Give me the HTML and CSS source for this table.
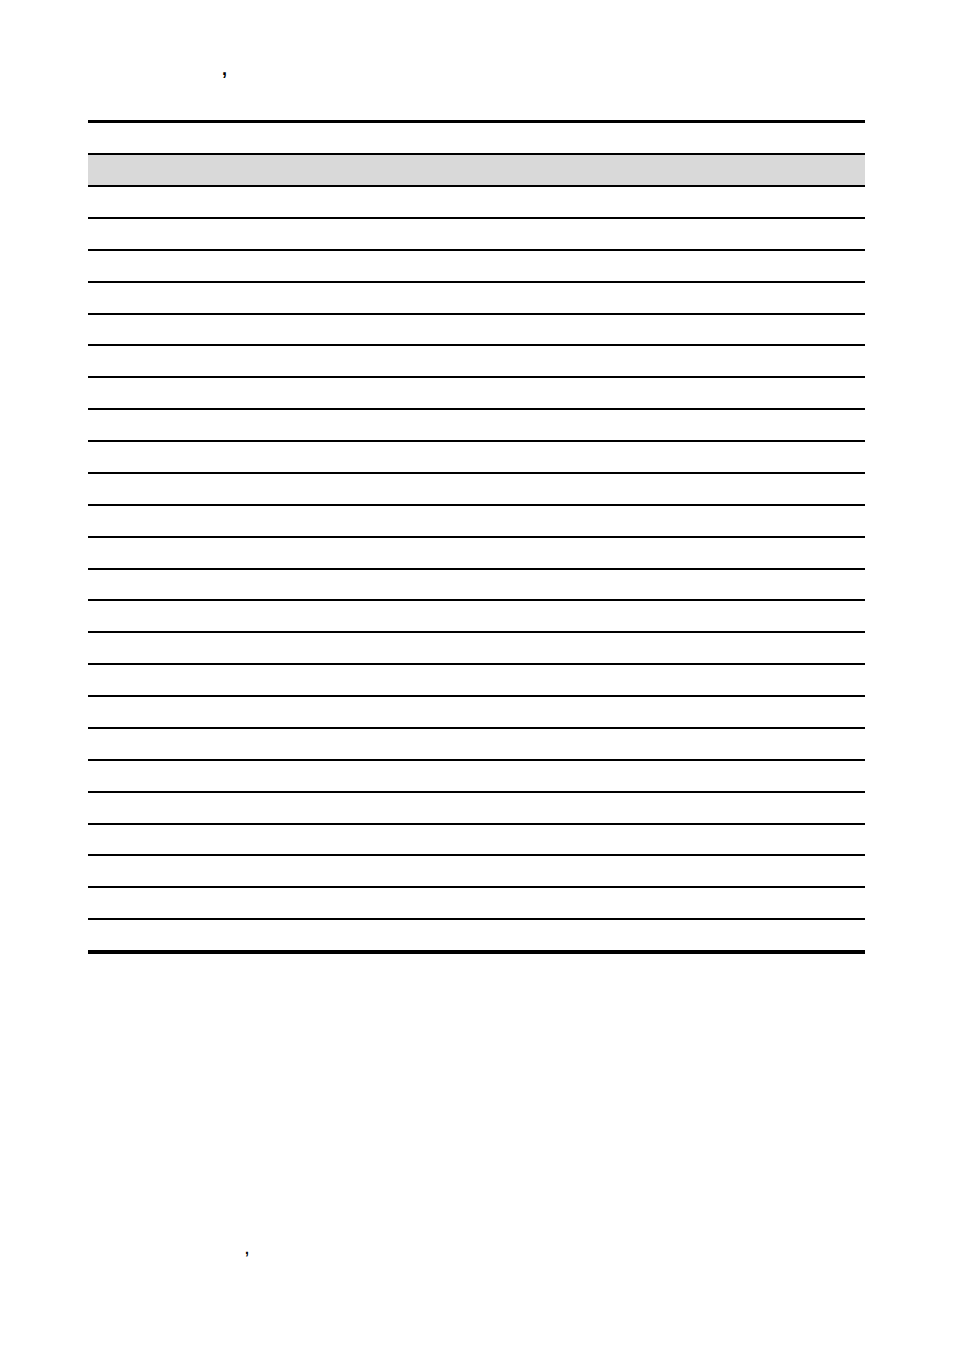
FILE: index.html
```html
<!DOCTYPE html>
<html>
<head>
<meta charset="utf-8">
<link rel="stylesheet" href="styles.css">
</head>
<body>
<div class="page">
  <p class="note-top">,</p>
  <div class="sheet">
    <div class="row row-first"></div>
    <div class="row row-head"></div>
    <div class="row"></div><div class="row"></div><div class="row"></div><div class="row"></div>
    <div class="row"></div><div class="row"></div><div class="row"></div><div class="row"></div>
    <div class="row"></div><div class="row"></div><div class="row"></div><div class="row"></div>
    <div class="row"></div><div class="row"></div><div class="row"></div><div class="row"></div>
    <div class="row"></div><div class="row"></div><div class="row"></div><div class="row"></div>
    <div class="row"></div><div class="row"></div><div class="row"></div><div class="row row-last"></div>
  </div>
  <p class="note-bottom">,</p>
</div>
</body>
</html>
```
FILE: styles.css
```css
html, body {
  margin: 0;
  padding: 0;
  background: #ffffff;
}
.page {
  width: 954px;
  font-family: "Liberation Sans", Arial, sans-serif;
  color: #000;
}
.note-top {
  margin: 59px 0 0 222px;
  font-size: 18px;
  line-height: 20px;
  font-weight: bold;
  height: 20px;
}
.sheet {
  margin: 41px 0 0 88px;
  width: 777px;
}
.row {
  border-top: 2px solid #000;
  height: 29.875px;
}
.row-first {
  border-top-width: 3px;
  height: 30px;
}
.row-head {
  height: 30px;
  background: #d9d9d9;
}
.row-last {
  border-bottom: 4px solid #000;
}
.note-bottom {
  margin: 287px 0 0 245px;
  font-size: 14px;
  line-height: 16px;
  font-weight: bold;
}
```
